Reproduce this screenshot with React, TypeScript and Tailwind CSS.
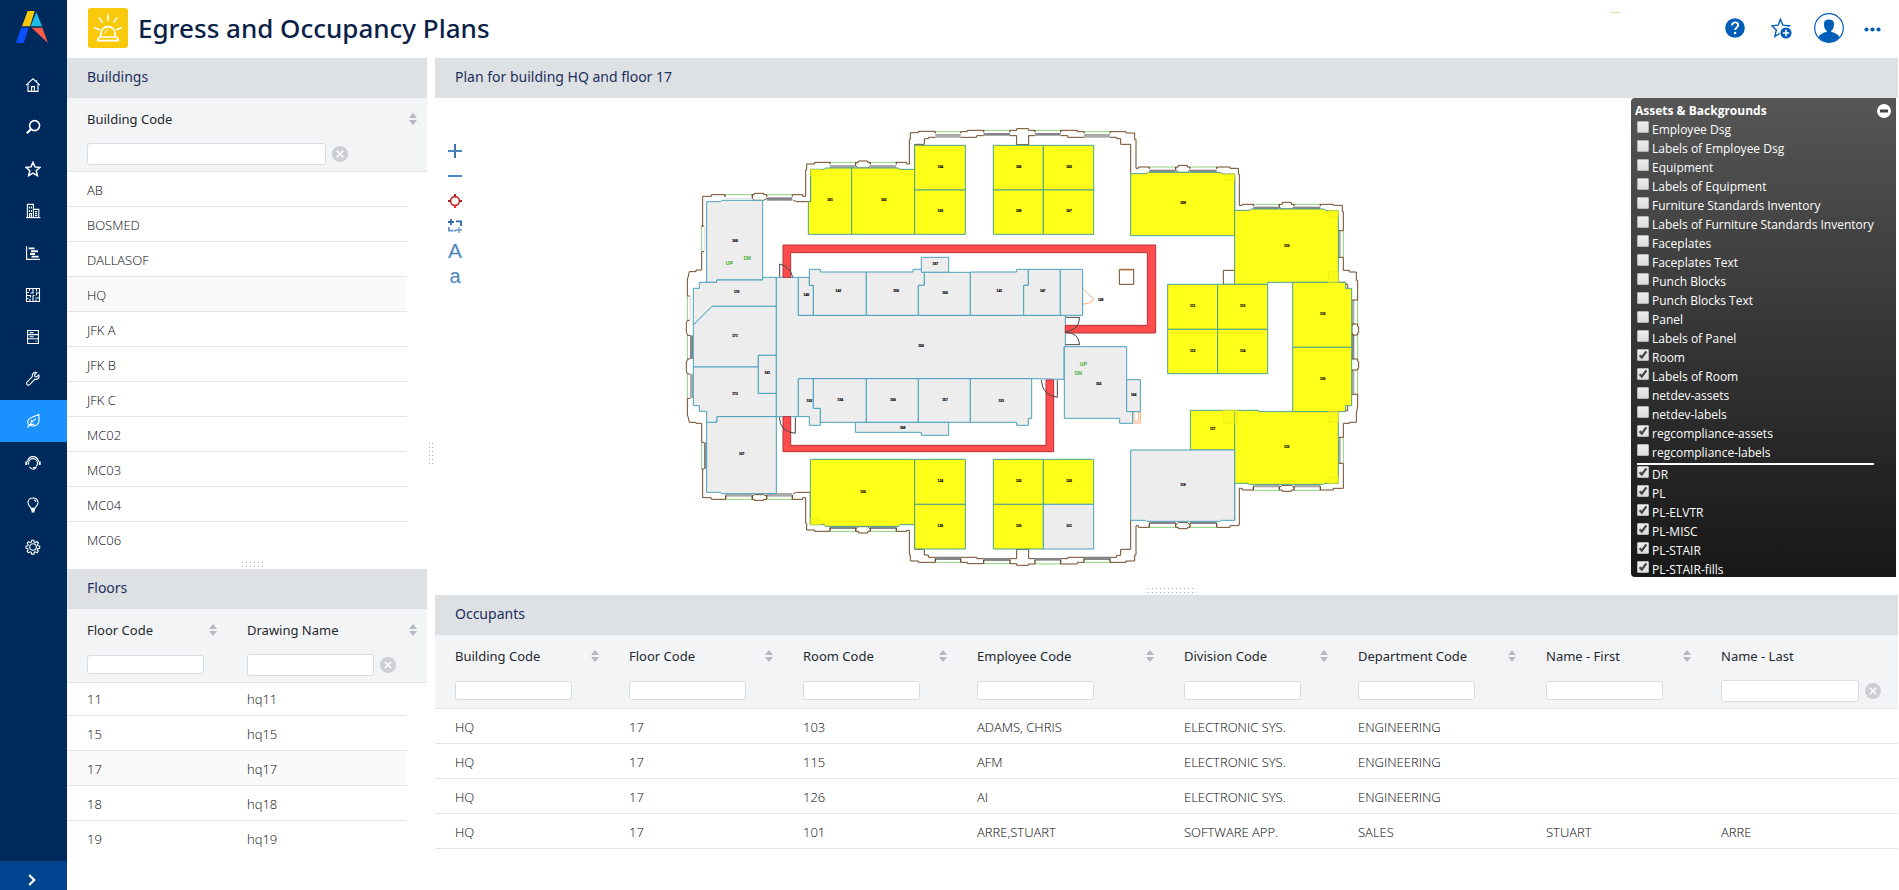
import React from 'react';

type Pane = { children: React.ReactNode };

/* ---------- Navigation icons ---------- */

const navIcons: { label: string; art: React.ReactNode }[] = [
  { label: 'Home', art: <><path d="M1 8.2 8 1.8l7 6.4" /><path d="M3 7v7.4h10V7" /><path d="M6.6 14.4V9.6h2.8v4.8" /><path d="M11.6 3.2v1.6" /></> },
  { label: 'Search', art: <><circle cx="9.6" cy="6.6" r="5" strokeWidth="1.6" /><path d="M5.8 10.4 1.8 14.2" strokeWidth="2.2" /></> },
  { label: 'Favorites', art: <path strokeWidth="1.5" d="m8 1.4 2 4.5 4.9.5-3.7 3.3 1.1 4.9L8 12.1l-4.3 2.5 1.1-4.9L1.1 6.4 6 5.9z" /> },
  { label: 'Buildings', art: <><path d="M1 14.6h14.4" /><path d="M2.4 14.4V1.4h6v13" /><path d="M8.4 6.4h5.4v8" /><path d="M4.4 3.6v2M6.4 3.6v2M4.4 7v2M6.4 7v2M4.6 14v-3.4h1.8V14M10 8.6h2.2M10 10.6h2.2M10 12.6h2.2" /></> },
  { label: 'Projects', art: <><path d="M1.6 1.2v13.2H15" /><path d="M3.6 3.4h6M6 6.2h7M5 9h5M6.6 11.6h7" strokeWidth="1.9" /></> },
  { label: 'Space', art: <><path d="M1.5 1.5h13v13h-13z" /><path d="M1.500 5.500h2.500M4.500 1.500v2.500M8 1.500v4.500H5.500M11.500 1.500v3M14.500 6h-3v2.500M1.500 8.500h4v2M8 8.500v6M1.500 11.500h2M5 12v2.500M10.500 11h4M11 12.500v2M8 8.500h1.500" /></> },
  { label: 'Assets', art: <><path d="M2.6 1.5h10.8v13H2.6z" /><path d="M2.6 5.6h10.8M2.6 9.8h10.8M4.6 3.6h4M4.6 7.7h4M10.6 12.2h1" /></> },
  { label: 'Maintenance', art: <path d="M13.9 3.9 11.6 6 10 5.6l-.4-1.7 2.1-2.3c-2.6-.7-5 1-4.4 4L2 11.2c-1 1.2 0 3.2 1.8 2.9.5-.1.8-.4 1.1-.7l5-5.2c3 .7 4.900-1.600 4-4.300z" /> },
  { label: 'Environment & Risk', art: <><path d="M13.8 1.6c.9 5.2.6 11-5.4 11.4-3.400 0-5.800-1.300-5.700-4.300.2-4.500 6.600-4.800 11.100-7.100z" /><path d="M2.400 14.600C4.600 11 7 8.200 10.800 5.600M6.600 9.600V6.800M5.200 11.400h4" /></> },
  { label: 'Service desk', art: <><path d="M2.300 6.600C3.300 3.200 5.300 1.600 8 1.600s4.700 1.600 5.700 5" /><path d="M1.300 6.400v3.600M14.700 6.400v3.600" strokeWidth="2" /><path d="M3.600 9.600c-.6-3.600 1.400-6 4.400-6s5.100 2.500 4.300 5.600c-.2 1-.7 1.900-1.300 2.500M4.600 11.700c1.400 2.800 5 3.200 6.400 1l-3-.3" /></> },
  { label: 'Ideas', art: <><path d="M6 11.400C5.600 9.600 3 8.600 3 5.600 3 2.800 5.200 1 8 1s5 1.800 5 4.600c0 3-2.600 4-3 5.800z" /><path d="M9 3c1 .2 1.700.9 1.900 1.900" /><path d="M6 12.800h4M6.600 14.600h2.800" strokeWidth="1.700" /></> },
  { label: 'Settings', art: <><circle cx="8" cy="8" r="3.300" /><path d="m6.700 1.300-.4 1.900-1.100.5-1.600-1.100-1.400 1.500 1 1.600-.5 1.100-1.700.4v2l1.800.5.4 1.100-1.100 1.600 1.500 1.500 1.600-1.100 1.100.5.4 1.800h2.200l.4-1.900 1.100-.4 1.600 1 1.400-1.500-1.100-1.500.5-1.200 1.900-.4V7.100l-1.800-.4-.5-1.100 1-1.600-1.500-1.500-1.500 1.100-1.200-.5-.4-1.800z" /></> },
];

function Sidebar() {
  return (
    <nav className="flex w-[67px] shrink-0 flex-col bg-[#002a5c]">
      <a href="#home" aria-label="Home page" className="flex h-16 pt-[11px] pl-4">
        <svg width="32" height="32" viewBox="0 0 96 96">
          <path d="M35 0h21L42 46H18z" fill="#f9ca0c" />
          <path d="m61 3 17 43H44z" fill="#1fbbe9" />
          <path d="M16 50h22L23 96H0z" fill="#0a52ff" />
          <path d="M47 50h32l17 46z" fill="#ff5a47" />
        </svg>
      </a>
      {navIcons.map((item, i) => (
        <a
          key={item.label}
          href={'#nav' + i}
          aria-label={item.label}
          className={i === 8 ? 'flex h-[42px] items-center justify-center bg-[#1991ff] pr-[2px]' : 'flex h-[42px] items-center justify-center pr-[2px]'}
        >
          <svg width="16" height="16" viewBox="0 0 16 16" fill="none" stroke="#fff" strokeWidth="1.100">{item.art}</svg>
        </a>
      ))}
      <button type="button" aria-label="Expand menu" className="mt-auto flex h-[29px] items-center justify-center bg-[#00438f] pt-2 pr-[4px]">
        <svg width="8" height="12" viewBox="0 0 8 12" fill="none" stroke="#fff" strokeWidth="2.200"><path d="m1.200 1 5 5-5 5" /></svg>
      </button>
    </nav>
  );
}

function Header() {
  return (
    <header className="flex h-[58px] shrink-0 items-start pl-[21px]">
      <svg className="mt-2" width="40" height="40" viewBox="0 0 120 120" fill="none" stroke="#fff" strokeWidth="5">
        <rect width="120" height="120" rx="9" fill="#f9ca0c" stroke="none" />
        <path d="M60 19v19M33 28l10 16M87 28 77 44M18 59l18 6M102 59l-18 6" />
        <path d="M39 86V76c0-11 9-20 21-20s21 9 21 20v10" />
        <path d="M50 76c1-6 4-10 10-11" strokeWidth="3" />
        <path d="M34 87h52M28 98h64" />
        <path d="m34 87-6 11M86 87l6 11" />
      </svg>
      <h1 className="ml-[10px] font-['Noto_Sans','Open_Sans',sans-serif] text-[26px] leading-[56px] font-medium text-[#0b1f47]">Egress and Occupancy Plans</h1>
      <svg className="mt-3 ml-auto" width="12" height="2" viewBox="0 0 12 2" fill="none" stroke="#e3da9a"><path d="M1 .8q5-.8 10 0" /></svg>
      <div className="ml-[104px] flex h-[56px] items-center pr-[18px]">
        <button type="button" aria-label="Help">
          <svg width="20" height="20" viewBox="0 0 20 20"><circle cx="10" cy="10" r="9.800" fill="#005eb8" /><path d="M7 7.400c0-2 1.400-3 3.100-3s3.100 1.100 3.100 2.700c0 2.300-3.100 2.300-3.100 4.900" fill="none" stroke="#fff" strokeWidth="1.900" /><circle cx="10.100" cy="15" r="1.300" fill="#fff" /></svg>
        </button>
        <button type="button" aria-label="Add to favorites" className="ml-[26px]">
          <svg width="21" height="21" viewBox="0 0 21 21"><path d="m9.400 1.200 2.500 6 6.500.6-4.900 4.200 1.200 6-5.300-3.100-5.500 3.600 1.400-6.500L.8 7.800l6.300-.6z" fill="none" stroke="#005eb8" strokeWidth="1.400" /><circle cx="15" cy="15" r="6.600" fill="#fff" /><circle cx="15" cy="15" r="5.600" fill="#005eb8" /><path d="M15 11.800v6.400M11.800 15h6.400" stroke="#fff" strokeWidth="1.600" /></svg>
        </button>
        <button type="button" aria-label="Account" className="ml-[22px]">
          <svg width="30" height="30" viewBox="0 0 30 30"><circle cx="15" cy="15" r="14.300" fill="#fff" stroke="#005eb8" strokeWidth="1.200" /><path d="M10 10.500C10 8 12 6.500 15 6.500s5 1.500 5 4c0 3.300-.5 6-2.700 7.300v1.300c3.300.5 6.800 2.300 8.200 4.900A14 14 0 0 1 15 29.300 14 14 0 0 1 4.500 24c1.400-2.600 4.900-4.400 8.200-4.900v-1.300C10.500 16.500 10 13.800 10 10.500z" fill="#005eb8" /></svg>
        </button>
        <button type="button" aria-label="More" className="mt-[3px] ml-5">
          <svg width="17" height="5" viewBox="0 0 17 5" fill="#005eb8"><circle cx="2.500" cy="2.500" r="2.100" /><circle cx="8.500" cy="2.500" r="2.100" /><circle cx="14.500" cy="2.500" r="2.100" /></svg>
        </button>
      </div>
    </header>
  );
}

/* ---------- Grid parts ---------- */

function PaneTitle({ children }: Pane) {
  return <h2 className="h-10 shrink-0 bg-[#dee1e4] pl-5 font-['Noto_Sans','Open_Sans',sans-serif] text-[14px] leading-[38px] text-[#1b2e5c]">{children}</h2>;
}

function SortButton({ label }: { label: string }) {
  return (
    <button type="button" aria-label={'Sort by ' + label} className="mr-[10px] ml-auto">
      <svg width="8" height="12" viewBox="0 0 8 12" fill="#b4b8bf"><path d="M4 0l4 5H0zM4 12l4-5H0z" /></svg>
    </button>
  );
}

type HeadProps = { label: string; input: string; clear?: boolean; sort?: boolean; span?: number };

function HeadCell({ label, input, clear, sort = true, span }: HeadProps) {
  return (
    <th scope="col" colSpan={span} className="border-b border-[#e2e4e6] bg-[#f3f4f6] pt-[10px] pb-[6px] pl-5 text-left font-normal">
      <div className="flex h-[22px] items-center">
        <span className="font-['Noto_Sans','Open_Sans',sans-serif] text-[13px] leading-5 whitespace-nowrap text-[#23282e]">{label}</span>
        {sort && <SortButton label={label} />}
      </div>
      <div className={'mt-[13px] flex h-[22px] items-center gap-[6px] ' + (clear ? '' : 'pb-px')}>
        <input type="text" aria-label={'Filter ' + label} className={'rounded-[3px] border border-[#d9dcdf] bg-white px-1 text-[12px] ' + input} />
        {clear && (
          <button type="button" aria-label="Clear filters">
            <svg width="16" height="16" viewBox="0 0 16 16"><circle cx="8" cy="8" r="8" fill="#cdd0d3" /><path d="m4.700 4.700 6.600 6.600M11.300 4.700l-6.600 6.600" stroke="#fff" strokeWidth="1.500" /></svg>
          </button>
        )}
      </div>
    </th>
  );
}

const cellText = 'border-b pl-5 text-[13px] leading-5 font-light whitespace-nowrap text-[#05070c] ';

function GripRow({ count }: { count: number }) {
  return (
    <svg width={count * 4} height="6" viewBox={'0 0 ' + count * 4 + ' 6'} fill="#a4a8ad">
      {Array.from({ length: count }, (_, i) => (
        <React.Fragment key={i}><rect x={i * 4 + 1} y="0" width="1" height="1" /><rect x={i * 4 + 1} y="4" width="1" height="1" /></React.Fragment>
      ))}
    </svg>
  );
}

const buildings = ['AB', 'BOSMED', 'DALLASOF', 'HQ', 'JFK A', 'JFK B', 'JFK C', 'MC02', 'MC03', 'MC04', 'MC06'];
const floors = ['11', '15', '17', '18', '19'];

function Buildings() {
  return (
    <section className="flex min-h-0 flex-1 flex-col">
      <PaneTitle>Buildings</PaneTitle>
      <div className="min-h-0 flex-1 overflow-hidden">
        <table className="w-full table-fixed border-separate border-spacing-0">
          <colgroup><col /><col className="w-5" /></colgroup>
          <thead><tr><HeadCell label="Building Code" input="h-[22px] w-[239px]" clear span={2} /></tr></thead>
          <tbody>
            {buildings.map((b, i) => (
              <tr key={b}>
                <td className={cellText + 'h-[35px] pt-[2px] ' + (b === 'HQ' ? 'bg-[#fafafa] ' : '') + (i < 10 ? 'border-[#e3e4e6]' : 'border-transparent')}>{b}</td>
                <td />
              </tr>
            ))}
          </tbody>
        </table>
      </div>
      <div className="flex h-3 shrink-0 items-center justify-center pt-1 pl-3"><GripRow count={6} /></div>
    </section>
  );
}

function Floors() {
  return (
    <section className="h-[321px] shrink-0 overflow-hidden">
      <PaneTitle>Floors</PaneTitle>
      <table className="w-full table-fixed border-separate border-spacing-0">
        <colgroup><col className="w-[160px]" /><col /><col className="w-5" /></colgroup>
        <thead>
          <tr>
            <HeadCell label="Floor Code" input="h-[19px] w-[117px]" />
            <HeadCell label="Drawing Name" input="h-[22px] w-[127px]" clear span={2} />
          </tr>
        </thead>
        <tbody>
          {floors.map((f, i) => {
            const cell = cellText + (i === 0 ? 'h-[33px] ' : 'h-[35px] pt-[2px] ') + (f === '17' ? 'bg-[#fafafa] ' : '') + (i < 4 ? 'border-[#e3e4e6]' : 'border-transparent');
            return <tr key={f}><td className={cell}>{f}</td><td className={cell}>{'hq' + f}</td><td /></tr>;
          })}
        </tbody>
      </table>
    </section>
  );
}

const occupants = [
  ['HQ', '17', '103', 'ADAMS, CHRIS', 'ELECTRONIC SYS.', 'ENGINEERING', '', ''],
  ['HQ', '17', '115', 'AFM', 'ELECTRONIC SYS.', 'ENGINEERING', '', ''],
  ['HQ', '17', '126', 'AI', 'ELECTRONIC SYS.', 'ENGINEERING', '', ''],
  ['HQ', '17', '101', 'ARRE,STUART', 'SOFTWARE APP.', 'SALES', 'STUART', 'ARRE'],
];

function Occupants() {
  return (
    <section className="h-[295px] shrink-0 overflow-hidden">
      <PaneTitle>Occupants</PaneTitle>
      <table className="w-full table-fixed border-separate border-spacing-0">
        <colgroup>
          <col className="w-[174px]" /><col className="w-[174px]" /><col className="w-[174px]" /><col className="w-[207px]" />
          <col className="w-[174px]" /><col className="w-[188px]" /><col className="w-[175px]" /><col />
        </colgroup>
        <thead>
          <tr>
            {['Building Code', 'Floor Code', 'Room Code', 'Employee Code', 'Division Code', 'Department Code', 'Name - First'].map((h) => (
              <HeadCell key={h} label={h} input="h-[19px] w-[117px]" />
            ))}
            <HeadCell label="Name - Last" input="h-[22px] w-[138px]" clear sort={false} />
          </tr>
        </thead>
        <tbody>
          {occupants.map((row) => (
            <tr key={row[2]}>{row.map((c, i) => <td key={i} className={cellText + 'h-[35px] border-[#e3e4e6] pt-[2px]'}>{c}</td>)}</tr>
          ))}
        </tbody>
      </table>
    </section>
  );
}

/* ---------- Floor plan ---------- */
/* Drawing units are a third of a pixel; E and S shift into the east and south halves. */

const E = 1050;
const S = 690;

type Room = { p: string; n?: string; x?: number; y?: number; dx?: number; dy?: number; g?: boolean };

const rooms: Room[] = [
  { p: '422,178 463,178 466,174 545,174 545,373 415,373 415,275 422,275', n: '101', x: 480, y: 268 },
  { p: '545,174 684,174 690,178 734,178 734,373 545,373', n: '102', x: 641, y: 268 },
  { p: '734,106 886,106 886,240 734,240', n: '104', x: 811, y: 169 },
  { p: '734,240 886,240 886,373 734,373', n: '103', x: 811, y: 301 },
  { p: '970,106 1120,106 1120,240 970,240', n: '106', x: 1046, y: 169 },
  { p: '970,240 1120,240 1120,373 970,373', n: '108', x: 1046, y: 301 },
  { p: '70,106 221,106 221,240 70,240', n: '105', x: 147, y: 169, dx: E },
  { p: '70,240 221,240 221,373 70,373', n: '107', x: 147, y: 301, dx: E },
  { p: '332,191 377,191 385,187 600,187 610,192 644,192 644,377 332,377', n: '109', x: 489, y: 277, dx: E },
  { p: '644,301 688,301 695,297 912,297 918,302 955,302 955,517 743,517 743,523 644,523', n: '110', x: 800, y: 406, dx: E },
  { p: '443,523 593,523 593,658 443,658', n: '111', x: 518, y: 586, dx: E },
  { p: '593,523 743,523 743,658 593,658', n: '113', x: 668, y: 586, dx: E },
  { p: '443,658 593,658 593,791 443,791', n: '112', x: 518, y: 721, dx: E },
  { p: '593,658 743,658 743,791 593,791', n: '114', x: 668, y: 721, dx: E },
  { p: '818,517 977,517 977,535 995,535 995,712 818,712', n: '118', x: 908, y: 610, dx: E },
  { p: '818,22 995,22 995,197 977,197 977,215 818,215', n: '116', x: 908, y: 115, dx: E, dy: S },
  { p: '511,211 644,211 644,330 511,330', n: '117', x: 578, y: 265, dx: E, dy: S },
  { p: '644,211 715,211 715,215 955,215 955,430 915,430 910,433 688,433 684,430 644,430', n: '115', x: 800, y: 319, dx: E, dy: S },
  { p: '332,330 644,330 644,541 604,541 600,544 380,544 377,541 332,541', n: '119', x: 489, y: 433, dx: E, dy: S, g: true },
  { p: '970,358 1120,358 1120,493 970,493', n: '122', x: 1046, y: 421, dy: S },
  { p: '970,493 1120,493 1120,627 970,627', n: '123', x: 1046, y: 556, dy: S },
  { p: '70,358 221,358 221,493 70,493', n: '120', x: 147, y: 421, dx: E, dy: S },
  { p: '70,493 221,493 221,627 70,627', n: '121', x: 147, y: 556, dx: E, dy: S, g: true },
  { p: '421,358 734,358 734,554 690,554 686,559 466,559 463,554 421,554', n: '126', x: 579, y: 454, dy: S },
  { p: '734,358 886,358 886,493 734,493', n: '124', x: 811, y: 421, dy: S },
  { p: '734,493 886,493 886,627 734,627', n: '125', x: 811, y: 556, dy: S },
  { p: '110,275 152,275 155,271 278,271 278,510 140,510 140,517 110,517', n: '160', x: 195, y: 391, g: true },
  { p: '140,510 278,510 278,502 319,502 319,589 126,589 70,645 70,535 88,535 88,517 140,517', n: '170', x: 200, y: 544, g: true },
  { p: '126,589 319,589 319,736 265,736 265,771 70,771 70,645', n: '171', x: 195, y: 676, g: true },
  { p: '70,81 265,81 265,160 319,160 319,230 141,230 141,247 110,247 110,214 88,214 88,197 70,197', n: '172', x: 195, y: 160, dy: S, g: true },
  { p: '265,46 319,46 319,160 265,160', n: '161', x: 292, y: 97, dy: S, g: true },
  { p: '141,230 319,230 319,461 155,461 152,457 110,457 110,247 141,247', n: '127', x: 215, y: 340, dy: S, g: true },
  { p: '319,502 385,502 385,616 1186,616 1186,710 1182,710 1182,808 1085,806 385,806 385,920 319,920', n: '150', x: 753, y: 706, g: true },
  { p: '385,502 418,502 418,526 430,526 430,616 385,616', n: '140', x: 409, y: 553, g: true },
  { p: '418,478 451,478 451,486 589,486 589,616 430,616 430,526 418,526', n: '142', x: 505, y: 541, g: true },
  { p: '589,486 729,486 729,478 763,478 763,526 745,526 745,616 589,616', n: '158', x: 678, y: 541, g: true },
  { p: '754,442 836,442 836,487 754,487', n: '167', x: 796, y: 460, g: true },
  { p: '763,487 901,487 901,616 745,616 745,526 763,526', n: '165', x: 825, y: 547, g: true },
  { p: '901,486 1040,486 1040,478 1075,478 1075,526 1061,526 1061,616 901,616', n: '141', x: 988, y: 541, g: true },
  { p: '25,478 121,478 121,616 11,616 11,526 25,526', n: '147', x: 68, y: 541, dx: E, g: true },
  { p: '121,478 188,478 188,616 121,616', dx: E, g: true },
  { p: '385,116 430,116 430,205 451,205 451,256 418,256 418,230 385,230', n: '152', x: 418, y: 181, dy: S, g: true },
  { p: '430,116 589,116 589,247 451,247 451,205 430,205', n: '154', x: 511, y: 178, dy: S, g: true },
  { p: '589,116 745,116 745,247 589,247', n: '156', x: 669, y: 178, dy: S, g: true },
  { p: '745,116 901,116 901,247 745,247', n: '157', x: 825, y: 178, dy: S, g: true },
  { p: '901,116 1085,116 1085,235 1075,235 1075,256 1040,256 1040,247 901,247', n: '151', x: 994, y: 181, dy: S, g: true },
  { p: '556,247 836,247 836,286 754,286 754,277 556,277', n: '168', x: 698, y: 262, dy: S, g: true },
  { p: '133,20 320,20 320,211 338,211 338,250 299,250 299,235 133,235', n: '163', x: 236, y: 130, dx: E, dy: S, g: true },
  { p: '320,119 361,119 361,215 320,215', n: '164', x: 341, y: 163, dx: E, dy: S, g: true },
];

const D = '#85868a';
const M = '#a9a9a9';
const L = '#e4e4e4';

/* [x1, x2, glass y, sill top, sill bottom, sill colour, dx, dy] */
const windowsH: [number, number, number, number, number, string, number, number][] = [
  [165, 247, 254, 264, 267, L, 0, 0], [290, 367, 254, 262, 272, D, 0, 0], [480, 557, 157, 165, 174, M, 0, 0], [601, 679, 157, 165, 174, M, 0, 0],
  [796, 872, 65, 72, 83, M, 0, 0], [941, 1020, 61, 69, 77, D, 0, 0],
  [45, 122, 61, 69, 77, D, E, 0], [192, 270, 65, 72, 83, M, E, 0], [388, 467, 171, 179, 187, D, E, 0], [510, 590, 171, 179, 187, D, E, 0],
  [700, 778, 283, 290, 297, D, E, 0], [822, 901, 283, 290, 297, D, E, 0],
  [45, 122, 672, 654, 662, D, E, S], [192, 270, 667, 650, 660, D, E, S], [388, 467, 562, 544, 552, D, E, S], [510, 590, 562, 544, 552, D, E, S],
  [700, 778, 451, 433, 442, M, E, S], [822, 901, 451, 433, 442, M, E, S],
  [167, 247, 478, 461, 470, M, 0, S], [290, 367, 478, 459, 470, M, 0, S], [480, 557, 574, 558, 567, D, 0, S], [601, 679, 574, 558, 567, D, 0, S],
  [796, 872, 667, 650, 660, D, 0, S], [941, 1020, 671, 654, 663, D, 0, S],
];

/* [y1, y2, glass x, sill left, sill right, sill colour, dx, dy] */
const windowsV: [number, number, number, number, number, string, number, number][] = [
  [348, 425, 95, 102, 106, L, 0, 0], [558, 631, 52, 59, 64, L, 0, 0], [676, 747, 52, 60, 69, D, 0, 0],
  [102, 175, 52, 60, 69, M, 0, S], [307, 387, 95, 102, 110, D, 0, S],
  [362, 442, 970, 955, 962, M, E, 0], [570, 642, 1013, 995, 1003, M, E, 0], [675, 747, 1013, 995, 1003, D, E, 0],
  [90, 163, 1013, 995, 1003, M, E, S], [292, 370, 970, 955, 962, M, E, S],
];

const wallsNW = 'M52 558V510L58 485H78V480H95V425M95 348H98V259H124V254H165M247 254H253V250H281V254H290M367 254H398V259H407V180H410V162H434V157H480M557 157H565V153H593V157H601M679 157H710V162H718V88H721V68H745V64H796M872 65H892V61H941M1020 61H1040V56H1075M734 178V103H763V86H775V82H796M872 82H920V77H941M1020 77H1040V104H1076V77M370 271L380 275H422V178M247 254V265L253 271H281L290 265M557 157V168L565 174H593L601 168M52 631L49 640V668L54 676';
const wallsNE = 'M25 56V61H45M122 61H172V65H192M270 65H318V69H344V88H348V175H355V171H388M467 171H475V166H502V171H510M590 171H630V175H655V193H658V286H667V283H700M778 283H787V277H814V283H822M901 283H940V286H967V305H970V362M970 442V481H988V486H1009V511H1013V570M1013 642V650H1016V668H1013V675M25 77H45M122 77H143V82H192M270 82H290V86H302V103H332V191M467 171V180L475 187H502L510 180M644 192V301M778 283V292L787 297H814L822 292M955 517H977V523H983V535M1000 642L996 650V668L1000 675';
const wallsSE = 'M1013 57V65H1016V85H1013V90M1013 163V197L1009 222V247H988V250H970V292M970 370V445H940V450H901M822 450H814V454H787V450H778M700 450H667V445H658V555H655V557H630V562H590M510 562H502V566H475V562H467M388 562H355V557H348V645H344V663H318V667H270M192 667H172V672H122M45 672H25V676H0M332 541V628H302V646H290V652H270M192 652H143V656H122M45 656H26V628M644 430V541M778 442L787 436H814L822 442M467 555L475 547H502L510 555M983 197V212H955';
const wallsSW = 'M1050 676H1040V671H1020M941 671H892V667H872M796 667H745V663H721V645H718V571H710V574H679M601 574H593V579H565V574H557M480 574H434V570H410V550H407V473H398V478H367M290 478H281V481H253V478H247M167 478H124V473H98V387M95 307V250H78V247H58L52 222V175M54 57L49 66V93L52 102M734 554V628H763V645H775V652H796M872 652H920V656H941M1020 656H1040V628H1076M370 461L380 457H421V554M557 574V567L565 560H593L601 567M247 478V468L253 464H281L290 468';

function FloorPlan() {
  return (
    <svg className="block h-full w-full" viewBox="-705 -36 4389 1467" role="img" aria-label="Floor plan of HQ floor 17">
      <g fill="none" stroke="#6f4a26" strokeWidth="3">
        {windowsH.map(([a, b, y, t, u, c, dx, dy], i) => (
          <g key={i} transform={`translate(${dx} ${dy})`}>
            <rect x={a} y={t} width={b - a} height={u - t} fill={c} stroke="none" />
            <path d={`M${a} ${y}H${b}`} stroke="#8fd07c" />
            <path d={`M${a} ${y}v${(t - y) * 0.7}M${b} ${y}v${(t - y) * 0.7}`} strokeWidth="4" />
          </g>
        ))}
        {windowsV.map(([a, b, x, l, r, c, dx, dy], i) => (
          <g key={i} transform={`translate(${dx} ${dy})`}>
            <rect x={l} y={a} width={r - l} height={b - a} fill={c} stroke="none" />
            <path d={`M${x} ${a}V${b}`} stroke="#8fd07c" />
            <path d={`M${l} ${a}H${x}M${l} ${b}H${x}`} />
          </g>
        ))}
        <path d={wallsNW} />
        <path d={wallsNE} transform={`translate(${E} 0)`} />
        <path d={wallsSE} transform={`translate(${E} ${S})`} />
        <path d={wallsSW} transform={`translate(0 ${S})`} />
        <path d="M1348 478h43v45h-43zM1660 481h35v42h-35z" />
        <path d="M1349 481h40M1388 905h23v34h-23zM1392 905v28h14v-28M1238 535l34 34q-12 13-34 14" stroke="#f6b07a" />
      </g>
      <g strokeWidth="3">
        {rooms.map((r, i) => (
          <g key={i} transform={`translate(${r.dx ?? 0} ${r.dy ?? 0})`}>
            <polygon points={r.p} fill={r.g ? '#ededed' : '#ffff1a'} stroke={r.g ? '#4ba0bc' : '#4aa38c'} />
          </g>
        ))}
      </g>
      <path d="M422 178h30v19h-30zM1664 192h30v19h-30zM1975 302h30v20h-30zM1975 485h30v32h-30zM1660 901h42v39h-42zM1975 905h30v32h-30zM1975 1100h30v20h-30zM422 1225h30v19h-30z" fill="#f4f414" stroke="#ecec14" strokeWidth="2" fillOpacity=".4" />
      <g fill="#ff4d4d" stroke="#b93038" strokeWidth="3">
        <path d="M339 502V405H1457V669H1186V646H1432V428H362V502z" />
        <path d="M339 920H362V1006H1128V810H1151V1025H339z" />
      </g>
      <g fill="none" stroke="#4a4448" strokeWidth="3">
        <path d="M329 500V462Q362 470 368 502" />
        <path d="M376 922V970Q330 966 328 922" />
        <path d="M1187 622H1229Q1228 660 1187 665M1187 667Q1226 668 1229 704H1187" />
        <path d="M1162 810V862Q1116 856 1114 810" />
      </g>
      <g className="font-['Liberation_Sans'] text-[10px] font-bold" fill="#000" stroke="#000" strokeWidth=".5" textAnchor="middle">
        {rooms.map((r, i) => r.n && <text key={i} x={(r.x ?? 0) + (r.dx ?? 0)} y={(r.y ?? 0) + (r.dy ?? 0) + 4}>{r.n}</text>)}
        <text x="1292" y="572">128</text>
      </g>
      <g className="font-['Liberation_Sans'] text-[15px]" fill="#3aae2c" stroke="#3aae2c" strokeWidth=".6" textAnchor="middle">
        <text x="178" y="465">UP</text><text x="232" y="450">DN</text>
        <text x="1240" y="768">UP</text><text x="1225" y="795">DN</text>
      </g>
    </svg>
  );
}

function PlanTools() {
  const button = 'flex h-[25px] w-5 items-center justify-center';
  return (
    <div className="absolute top-10 left-[10px] flex flex-col text-[#4d83bb]">
      <button type="button" aria-label="Zoom in" className={button}><svg width="14" height="14" viewBox="0 0 14 14" fill="none" strokeWidth="2"><path d="M7 0v14" stroke="#3a72b0" /><path d="M0 7h14" stroke="#4a82bd" /></svg></button>
      <button type="button" aria-label="Zoom out" className={button}><svg width="14" height="2" viewBox="0 0 14 2"><path d="M0 0h14v2H0z" fill="#4a82bd" /></svg></button>
      <button type="button" aria-label="Zoom extents" className={button}>
        <svg width="14" height="14" viewBox="0 0 14 14" fill="none" strokeWidth="1.600"><circle cx="7" cy="7" r="4.400" stroke="#c62828" /><path d="M7 0v3M0 7h3M11 7h3" stroke="#a32222" strokeWidth="2.200" /><path d="M7 11v3" stroke="#f03030" strokeWidth="2.200" /></svg>
      </button>
      <button type="button" aria-label="Zoom window" className={button}>
        <svg width="14" height="14" viewBox="0 0 14 14" fill="none" strokeWidth="1.800"><path d="M3 0v6M0 3h6M8 2.400h5.100V7" stroke="#2f69ab" /><path d="M.9 8v3.600H5.400M6 11.600h2" stroke="#6a94c8" /><path d="M11 8v6M8 11h6" stroke="#86a7d4" /></svg>
      </button>
      <button type="button" aria-label="Larger labels" className={button + " font-['Liberation_Sans'] text-[21px]"}>A</button>
      <button type="button" aria-label="Smaller labels" className={button + " font-['Liberation_Sans'] text-[20px]"}>a</button>
    </div>
  );
}

const layers: [string, boolean][] = [
  ['Employee Dsg', false], ['Labels of Employee Dsg', false], ['Equipment', false], ['Labels of Equipment', false],
  ['Furniture Standards Inventory', false], ['Labels of Furniture Standards Inventory', false], ['Faceplates', false], ['Faceplates Text', false],
  ['Punch Blocks', false], ['Punch Blocks Text', false], ['Panel', false], ['Labels of Panel', false], ['Room', true], ['Labels of Room', true],
  ['netdev-assets', false], ['netdev-labels', false], ['regcompliance-assets', true], ['regcompliance-labels', false],
];
const backgrounds: [string, boolean][] = [['DR', true], ['PL', true], ['PL-ELVTR', true], ['PL-MISC', true], ['PL-STAIR', true], ['PL-STAIR-fills', true]];

function LayerRow({ name, on }: { name: string; on: boolean }) {
  return (
    <label className="flex h-[19px] items-start gap-[3px] pl-[6px] text-[12px] leading-[18px] whitespace-nowrap text-white">
      <span className="relative block h-3 w-3 shrink-0">
        <input type="checkbox" defaultChecked={on} className="peer block h-3 w-3 appearance-none rounded-[1px] border border-[#b5b5b5] bg-linear-to-b from-[#ededed] to-[#dcdcdc]" />
        <svg className="pointer-events-none absolute inset-0 hidden peer-checked:block" width="12" height="12" viewBox="0 0 12 12" fill="none" stroke="#444" strokeWidth="2.200"><path d="m2.600 6.200 2.200 2.300 4.600-6.100" /></svg>
      </span>
      <span>{name}</span>
    </label>
  );
}

function LayerPanel() {
  return (
    <aside className="absolute top-0 right-[2px] h-[479px] w-[265px] overflow-hidden rounded-l-[4px] bg-linear-to-b from-[#565656] to-[#181818]">
      <div className="flex h-[23px] items-center justify-between pt-[2px] pr-[5px] pl-1">
        <h3 className="text-[12px] leading-[21px] font-bold text-white">Assets &amp; Backgrounds</h3>
        <button type="button" aria-label="Collapse panel">
          <svg width="14" height="14" viewBox="0 0 14 14"><circle cx="7" cy="7" r="7" fill="#fff" /><path d="M3 5.500h8v3H3z" fill="#444" /></svg>
        </button>
      </div>
      {layers.map(([n, on]) => <LayerRow key={n} name={n} on={on} />)}
      <hr className="mr-[22px] mb-px ml-[6px] border-0 border-t-2 border-white" />
      {backgrounds.map(([n, on]) => <LayerRow key={n} name={n} on={on} />)}
    </aside>
  );
}

export default function App() {
  return (
    <div className="flex h-screen overflow-hidden bg-white font-['Open_Sans','Noto_Sans',sans-serif]">
      <Sidebar />
      <div className="flex min-w-0 flex-1 flex-col">
        <Header />
        <main className="flex min-h-0 flex-1 pr-px">
          <div className="flex w-[360px] shrink-0 flex-col">
            <Buildings />
            <Floors />
          </div>
          <div className="flex w-2 shrink-0 items-center justify-center pr-[2px] pb-[40px]">
            <svg className="shrink-0" width="5" height="24" viewBox="0 0 5 24" fill="#a4a8ad">
              {[1, 5, 9, 13, 17, 21].map((y) => <React.Fragment key={y}><rect x="1" y={y} width="1" height="1" /><rect x="4" y={y} width="1" height="1" /></React.Fragment>)}
            </svg>
          </div>
          <div className="flex min-w-0 flex-1 flex-col">
            <section className="flex min-h-0 flex-1 flex-col">
              <PaneTitle>Plan for building HQ and floor 17</PaneTitle>
              <div className="relative min-h-0 flex-1">
                <FloorPlan />
                <PlanTools />
                <LayerPanel />
              </div>
            </section>
            <div className="flex h-2 shrink-0 items-end justify-center pb-px pl-2"><GripRow count={12} /></div>
            <Occupants />
          </div>
        </main>
      </div>
    </div>
  );
}
